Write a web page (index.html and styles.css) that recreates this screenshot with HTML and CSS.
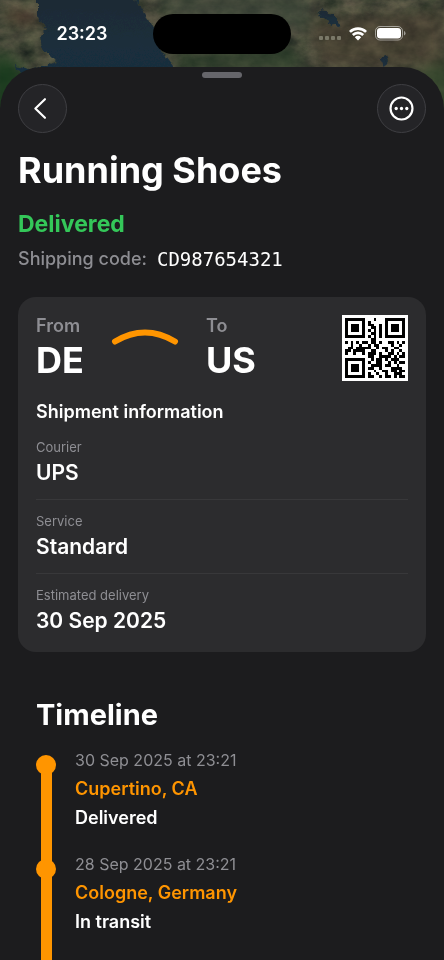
FILE: index.html
```html
<!DOCTYPE html>
<html lang="en">
<head>
<meta charset="utf-8">
<meta name="viewport" content="width=device-width, initial-scale=1">
<title>Running Shoes</title>
<link rel="stylesheet" href="styles.css">
</head>
<body>
<div class="screen">
  <svg class="map" viewBox="0 0 444 140" preserveAspectRatio="xMidYMin slice" aria-hidden="true">
    <defs>
      <filter id="terrain" x="0" y="0" width="100%" height="100%" color-interpolation-filters="sRGB">
        <feTurbulence type="fractalNoise" baseFrequency="0.05 0.07" numOctaves="5" seed="8"/>
        <feColorMatrix values="0.34 0.06 0 0 0.07  0.28 0.1 0 0 0.09  0.22 0.04 0 0 0.09  0 0 0 0 1"/>
      </filter>
      <filter id="coast" x="-10%" y="-10%" width="120%" height="120%">
        <feTurbulence type="fractalNoise" baseFrequency="0.12" numOctaves="3" seed="3"/>
        <feDisplacementMap in="SourceGraphic" scale="9" xChannelSelector="R" yChannelSelector="G"/>
      </filter>
      <filter id="soft" color-interpolation-filters="sRGB"><feGaussianBlur stdDeviation="7"/></filter>
      <linearGradient id="water" x2="0" y2="1"><stop stop-color="#1c2b34"/><stop offset="1" stop-color="#192f3f"/></linearGradient>
    </defs>
    <rect width="444" height="140" filter="url(#terrain)"/>
    <g filter="url(#soft)">
      <path d="M-10 52L14 58L24 72L20 150H-10Z" fill="#183b1d" opacity=".9"/>
      <path d="M5 8L38 14L36 24L10 22Z" fill="#51362a" opacity=".7"/>
      <path d="M146 -5H310V30L180 20Z" fill="#3f4a3c" opacity=".6"/>
      <path d="M170 54L290 44L310 72H180Z" fill="#263b27" opacity=".7"/>
      <path d="M310 20L444 10V67H320Z" fill="#4a3c2e" opacity=".5"/>
      <path d="M418 67L454 60V140H420Z" fill="#31462a" opacity=".7"/>
    </g>
    <g filter="url(#coast)" fill="url(#water)">
      <path d="M38 -6L126 -6L140 6L148 18L156 32L160 46L166 58L178 74L18 74L14 66L34 70L56 62L42 48L40 36L46 30L38 14Z"/>
      <path d="M128 -6h14l-5 9z"/>
      <path d="M316 10l20 2v8l6 10l-10-6l-14-8z"/>
      <path d="M379 58l8-3l2 5l-4 7l-4-4z"/>
    </g>
  </svg>

  <header class="status">
    <time class="clock">23:23</time>
    <div class="island"></div>
    <div class="indicators">
      <svg class="signal" viewBox="0 0 22 4" aria-hidden="true"><g fill="#7a7868"><rect width="4" height="4" rx="1"/><rect x="6" width="4" height="4" rx="1"/><rect x="12" width="4" height="4" rx="1"/><rect x="18" width="4" height="4" rx="1"/></g></svg>
      <svg class="wifi" viewBox="0 0 18 14" aria-hidden="true"><g fill="none" stroke="#fff" stroke-width="2.7"><path d="M.9 4.9a11.5 11.5 0 0 1 16.2 0"/><path d="M3.800 8a7.400 7.400 0 0 1 10.400 0"/></g><path d="M5.800 10.200a4.500 4.500 0 0 1 6.400 0L9 13.600z" fill="#fff"/></svg>
      <svg class="battery" viewBox="0 0 31 15" aria-hidden="true"><rect x=".5" y=".5" width="27" height="13.5" rx="4.5" fill="none" stroke="#fff" stroke-opacity=".5"/><rect x="2" y="2" width="24" height="10.5" rx="3.2" fill="#fff"/><path d="M29 5v4.500q1.500-.6 1.500-2.250T29 5" fill="#fff" fill-opacity=".5"/></svg>
    </div>
  </header>

  <main class="sheet">
    <div class="grabber"></div>
    <nav class="toolbar">
      <button class="round" type="button" aria-label="Back">
        <svg viewBox="0 0 48 48" aria-hidden="true"><path d="M26.500 14.500L16.700 24L26.500 33.500" fill="none" stroke="#fff" stroke-width="2.200" stroke-linecap="round" stroke-linejoin="round"/></svg>
      </button>
      <button class="round" type="button" aria-label="More">
        <svg viewBox="0 0 48 48" aria-hidden="true"><circle cx="24" cy="24" r="11.200" fill="none" stroke="#fff" stroke-width="2.200"/><g fill="#fff"><circle cx="18.600" cy="24" r="1.700"/><circle cx="24" cy="24" r="1.700"/><circle cx="29.400" cy="24" r="1.700"/></g></svg>
      </button>
    </nav>

    <section class="summary">
      <h1>Running Shoes</h1>
      <p class="state">Delivered</p>
      <p class="code"><span>Shipping code:</span><span class="number">CD987654321</span></p>
    </section>

    <section class="card">
      <div class="route">
        <div class="place"><span class="caption">From</span><strong>DE</strong></div>
        <svg class="arc" viewBox="0 0 68 18" aria-hidden="true"><path d="M4 13.500Q34-4.500 64 13.500" fill="none" stroke="#ff9500" stroke-width="6" stroke-linecap="round"/></svg>
        <div class="place"><span class="caption">To</span><strong>US</strong></div>
        <svg class="qr" viewBox="0 0 23 23" role="img" aria-label="QR code" shape-rendering="crispEdges"><rect width="23" height="23" fill="#fff"/><path id="modules" transform="translate(1 1)"/></svg>
      </div>
      <h2>Shipment information</h2>
      <dl class="facts">
        <div><dt>Courier</dt><dd>UPS</dd></div>
        <div><dt>Service</dt><dd>Standard</dd></div>
        <div><dt>Estimated delivery</dt><dd>30 Sep 2025</dd></div>
      </dl>
    </section>

    <section class="timeline">
      <h2>Timeline</h2>
      <ol>
        <li><time>30 Sep 2025 at 23:21</time><span class="where">Cupertino, CA</span><span>Delivered</span></li>
        <li><time>28 Sep 2025 at 23:21</time><span class="where">Cologne, Germany</span><span>In transit</span></li>
      </ol>
    </section>
  </main>
</div>
<script src="script.js"></script>
</body>
</html>
```
FILE: styles.css
```css
* { box-sizing: border-box; }

body, h1, h2, p, dl, dd, ol { margin: 0; padding: 0; }

body {
  background: #1c1c1e;
  color: #fff;
  font-family: Inter, "Liberation Sans", sans-serif;
}

.screen {
  position: relative;
  display: flex;
  flex-direction: column;
  min-height: 100vh;
}

.map {
  position: absolute;
  top: 0;
  left: 0;
  width: 100%;
  height: 140px;
}

.status {
  position: relative;
  display: grid;
  grid-template-columns: 1fr 138px 1fr;
  align-items: center;
  height: 67px;
}

.clock {
  padding-left: 11px;
  text-align: center;
  font-size: 18px;
  font-weight: 600;
}

.island {
  height: 40px;
  border-radius: 20px;
  background: #000;
}

.indicators {
  display: flex;
  align-items: center;
  justify-content: flex-end;
  gap: 8px;
  padding-right: 38px;
}

.signal { width: 22px; height: 4px; margin-top: 8px; }
.wifi { width: 18px; height: 14px; }
.battery { width: 31px; height: 15px; }

.sheet {
  position: relative;
  display: flex;
  flex: 1;
  flex-direction: column;
  padding: 5px 18px 0;
  border-radius: 42px 42px 0 0;
  background: #1c1c1e;
}

.grabber {
  width: 40px;
  height: 6px;
  margin: 0 auto 6px;
  border-radius: 3px;
  background: #66666b;
}

.toolbar { display: flex; justify-content: space-between; }

.round {
  width: 49px;
  height: 49px;
  padding: 0;
  border: 1px solid #3f3f43;
  border-radius: 50%;
  background: #242427;
}

.round svg { display: block; width: 100%; }

.summary { padding-top: 14px; }

h1 { font-size: 36px; line-height: 46px; }

.state {
  margin-top: 16px;
  color: #34c759;
  font-size: 23px;
  font-weight: 700;
  line-height: 30px;
}

.code {
  display: flex;
  gap: 10px;
  margin-top: 8px;
  color: #8e8e93;
  font-size: 18px;
  font-weight: 500;
  line-height: 24px;
}

.number {
  color: #fff;
  font-family: "DejaVu Sans Mono", monospace;
  font-size: 19px;
}

.card {
  margin-top: 26px;
  padding: 17px 18px 16px;
  border-radius: 18px;
  background: #2c2c2e;
}

.route { display: flex; align-items: flex-start; }

.place { display: flex; flex-direction: column; min-width: 48px; }

.caption {
  color: #8e8e93;
  font-size: 18px;
  font-weight: 600;
  line-height: 24px;
}

.place strong { font-size: 36px; line-height: 44px; }

.arc { width: 68px; height: 18px; margin: 14px 27px 0; }

.qr { width: 66px; height: 66px; margin: 1px 0 0 auto; }

.card h2 {
  margin-top: 18px;
  font-size: 18px;
  font-weight: 600;
  line-height: 24px;
}

.facts div { padding: 11px 0; border-bottom: 1px solid #38383a; }
.facts div:first-child { padding-top: 13px; }
.facts div:last-child { padding-bottom: 0; border: 0; }

dt { color: #8e8e93; font-size: 13px; line-height: 20px; }

dd {
  font-size: 21px;
  font-weight: 600;
  line-height: 31px;
}

.timeline {
  display: flex;
  flex: 1;
  flex-direction: column;
  padding: 46px 18px 0;
}

.timeline h2 { font-size: 29px; line-height: 34px; }

.timeline ol {
  display: flex;
  flex: 1;
  flex-direction: column;
  margin-top: 15px;
  list-style: none;
}

.timeline li {
  position: relative;
  display: flex;
  flex-direction: column;
  padding: 0 0 19px 39px;
  font-size: 18px;
  font-weight: 600;
  line-height: 29px;
}

.timeline li:last-child { flex: 1; }

.timeline li::before {
  content: "";
  position: absolute;
  top: 18px;
  bottom: -18px;
  left: 5px;
  width: 11px;
  background: #ff9500;
}

.timeline li:last-child::before { bottom: 0; }

.timeline li::after {
  content: "";
  position: absolute;
  top: 8px;
  left: 0;
  width: 20px;
  height: 20px;
  border-radius: 50%;
  background: #ff9500;
}

.timeline time {
  color: #8e8e93;
  font-size: 16px;
  font-weight: 400;
  line-height: 27px;
}

.where { color: #ff9500; }
```
FILE: script.js
```js
// Rows of the QR code; "#" is a dark module.
const rows = [
  "#######...#...#######",
  "#.....#.#.....#.....#",
  "#.###.#.##..#.#.###.#",
  "#.###.#..##.#.#.###.#",
  "#.###.#.#.#.#.#.###.#",
  "#.....#..##.#.#.....#",
  "#######.#.#.#.#######",
  ".........##..........",
  "#.#.#.##.##.#..##.#.#",
  "..#..#..#.##....#..#.",
  ".##.#####..#.##..##..",
  "##.####..##...#.#..#.",
  "#..#..#.###.#..##.#.#",
  "........##..####.#.##",
  "#######..#.##.#.###..",
  "#.....#.#..##..#.#.##",
  "#.###.#..####.##..#..",
  "#.###.#.##..#...####.",
  "#.###.#...#..##.##.##",
  "#.....#.#..#..#..###.",
  "#######.##..#.##.#.##"
];

const path = rows.map((row, y) =>
  [...row].map((cell, x) => cell === "#" ? `M${x} ${y}h1v1h-1z` : "").join("")
).join("");

document.getElementById("modules").setAttribute("d", path);
```
